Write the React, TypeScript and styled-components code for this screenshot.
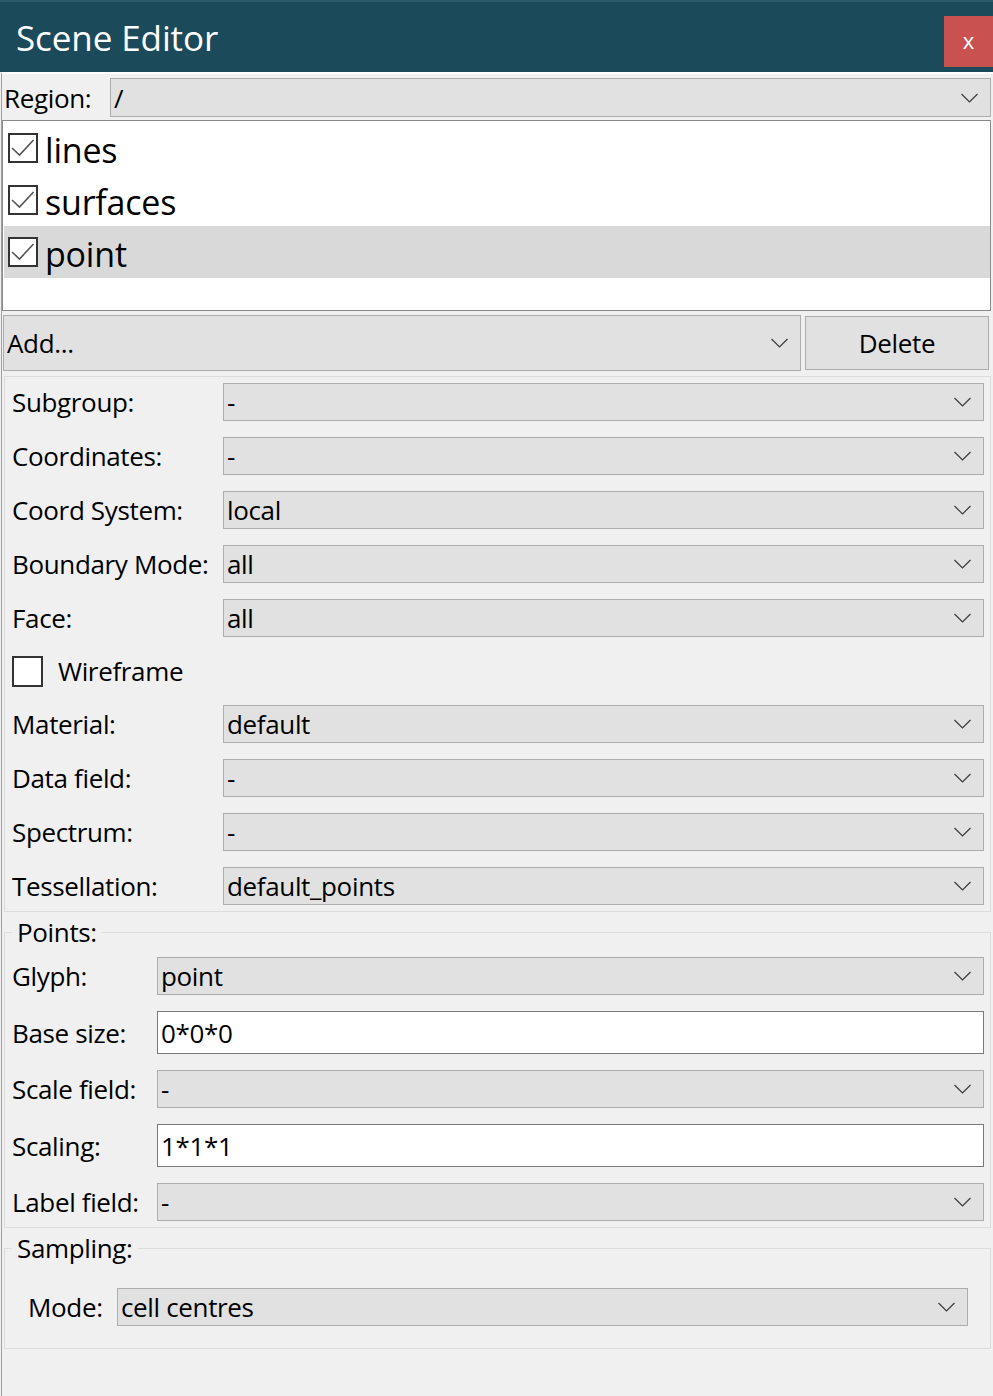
import React from "react";
import styled, { createGlobalStyle } from "styled-components";

const GlobalStyle = createGlobalStyle`
  html, body {
    margin: 0;
    padding: 0;
    background: #f0f0f0;
  }
  * {
    box-sizing: border-box;
  }
`;

const Window = styled.div`
  width: 993px;
  height: 1396px;
  background: #f0f0f0;
  font-family: "Open Sans", "Noto Sans", sans-serif;
  color: #000;
  display: flex;
  flex-direction: column;
  overflow: hidden;
`;

const TitleBar = styled.div`
  height: 72px;
  flex: none;
  background: #1b4a5b;
  border-top: 2px solid #2b5a6a;
  display: flex;
  align-items: center;
  justify-content: space-between;
  padding-left: 16px;
`;

const Title = styled.h1`
  margin: 0;
  font-size: 35px;
  font-weight: 400;
  color: #ffffff;
  line-height: 1;
  letter-spacing: -0.1px;
`;

const CloseButton = styled.button`
  align-self: flex-end;
  margin-bottom: 5px;
  width: 49px;
  height: 51px;
  border: none;
  background: #c9514f;
  color: #ffffff;
  font-family: "Open Sans", sans-serif;
  font-size: 22px;
  line-height: 1;
  padding: 0 0 4px;
`;

const Body = styled.div`
  flex: 1;
  margin-left: 1px;
  border-left: 1px solid #a0a0a0;
  border-top: 2px solid #ffffff;
  display: flex;
  flex-direction: column;
  letter-spacing: -0.35px;
`;

const RegionRow = styled.div`
  display: flex;
  align-items: center;
  height: 43px;
  padding: 4px 2px 0 2px;
`;

const RegionLabel = styled.span`
  width: 106px;
  flex: none;
  font-size: 26px;
`;

const Combo = styled.div<{ $height?: number }>`
  flex: 1;
  height: ${(p) => p.$height ?? 38}px;
  display: flex;
  align-items: center;
  justify-content: space-between;
  padding: 0 12px 0 3px;
  background: #e1e1e1;
  border: 1px solid #adadad;
  font-size: 26px;
  white-space: nowrap;
`;

const ItemList = styled.div`
  margin: 3px 2px 0 0;
  height: 191px;
  background: #ffffff;
  border: 1px solid #8a8a8a;
  padding: 1px 0 0 1px;
`;

const Item = styled.div<{ $selected?: boolean }>`
  height: 52px;
  display: flex;
  align-items: center;
  gap: 7px;
  padding-left: 4px;
  background: ${(p) => (p.$selected ? "#d9d9d9" : "transparent")};
  font-size: 34px;
  letter-spacing: -0.2px;

  & > span:last-child {
    padding-top: 3px;
  }
`;

const Box = styled.span<{ $size: number }>`
  width: ${(p) => p.$size}px;
  height: ${(p) => p.$size}px;
  flex: none;
  border: 2px solid #333333;
  background: #ffffff;
  display: flex;
  align-items: center;
  justify-content: center;
`;

const ActionRow = styled.div`
  display: flex;
  gap: 4px;
  height: 56px;
  margin: 4px 4px 0 1px;
`;

const DeleteButton = styled.button`
  width: 184px;
  margin: 1px 0;
  background: #e1e1e1;
  border: 1px solid #adadad;
  font-family: "Open Sans", sans-serif;
  font-size: 26px;
  letter-spacing: -0.35px;
  color: #000;
  padding: 0;
`;

const Frame = styled.div`
  margin: 5px 2px 0 2px;
  border: 1px solid #dcdcdc;
  padding: 6px 6px 6px 7px;
  display: flex;
  flex-direction: column;
  gap: 16px;
`;

const Group = styled.fieldset`
  margin: 3px 2px 0 2px;
  min-width: 0;
  border: 1px solid #dcdcdc;
  padding: 0;
`;

const Legend = styled.legend`
  margin-left: 7px;
  padding: 0 5px;
  font-size: 26px;
  line-height: 34px;
`;

const GroupBody = styled.div<{ $pad: string }>`
  padding: ${(p) => p.$pad};
  display: flex;
  flex-direction: column;
  gap: 16px;
`;

const Row = styled.div<{ $labelWidth: number }>`
  display: grid;
  grid-template-columns: ${(p) => p.$labelWidth}px 1fr;
  align-items: center;
`;

const Label = styled.span`
  font-size: 26px;
  white-space: nowrap;
`;

const TextInput = styled.div`
  height: 43px;
  display: flex;
  align-items: center;
  padding-left: 3px;
  background: #ffffff;
  border: 1px solid #7a7a7a;
  font-size: 26px;
`;

const CheckRow = styled.div`
  height: 36px;
  display: flex;
  align-items: center;
  gap: 15px;
  font-size: 26px;
`;

const Chevron = () => (
  <svg width="17" height="10" viewBox="0 0 17 10" style={{ flex: "none" }}>
    <polyline points="0.5,1 8.5,9 16.5,1" fill="none" stroke="#3a3a3a" strokeWidth="1.2" />
  </svg>
);

const Check = () => (
  <svg width="26" height="26" viewBox="0 0 26 26">
    <polyline points="2,13 9.5,20 23.5,5" fill="none" stroke="#555555" strokeWidth="1.6" />
  </svg>
);

const Select = ({ value, height }: { value: string; height?: number }) => (
  <Combo $height={height}>
    <span>{value}</span>
    <Chevron />
  </Combo>
);

const mainFields = [
  { label: "Subgroup:", value: "-" },
  { label: "Coordinates:", value: "-" },
  { label: "Coord System:", value: "local" },
  { label: "Boundary Mode:", value: "all" },
  { label: "Face:", value: "all" },
];

const lowerFields = [
  { label: "Material:", value: "default" },
  { label: "Data field:", value: "-" },
  { label: "Spectrum:", value: "-" },
  { label: "Tessellation:", value: "default_points" },
];

const items = ["lines", "surfaces", "point"];

export default function App() {
  return (
    <Window>
      <GlobalStyle />
      <TitleBar>
        <Title>Scene Editor</Title>
        <CloseButton>x</CloseButton>
      </TitleBar>
      <Body>
        <RegionRow>
          <RegionLabel>Region:</RegionLabel>
          <Select value="/" height={39} />
        </RegionRow>

        <ItemList>
          {items.map((name, i) => (
            <Item key={name} $selected={i === items.length - 1}>
              <Box $size={30}>
                <Check />
              </Box>
              <span>{name}</span>
            </Item>
          ))}
        </ItemList>

        <ActionRow>
          <Select value="Add..." height={56} />
          <DeleteButton>Delete</DeleteButton>
        </ActionRow>

        <Frame>
          {mainFields.map((f) => (
            <Row key={f.label} $labelWidth={211}>
              <Label>{f.label}</Label>
              <Select value={f.value} />
            </Row>
          ))}
          <CheckRow>
            <Box $size={31} />
            <span>Wireframe</span>
          </CheckRow>
          {lowerFields.map((f) => (
            <Row key={f.label} $labelWidth={211}>
              <Label>{f.label}</Label>
              <Select value={f.value} />
            </Row>
          ))}
        </Frame>

        <Group>
          <Legend>Points:</Legend>
          <GroupBody $pad="8px 6px 6px 7px">
            <Row $labelWidth={145}>
              <Label>Glyph:</Label>
              <Select value="point" />
            </Row>
            <Row $labelWidth={145}>
              <Label>Base size:</Label>
              <TextInput>0*0*0</TextInput>
            </Row>
            <Row $labelWidth={145}>
              <Label>Scale field:</Label>
              <Select value="-" />
            </Row>
            <Row $labelWidth={145}>
              <Label>Scaling:</Label>
              <TextInput>1*1*1</TextInput>
            </Row>
            <Row $labelWidth={145}>
              <Label>Label field:</Label>
              <Select value="-" />
            </Row>
          </GroupBody>
        </Group>

        <Group>
          <Legend>Sampling:</Legend>
          <GroupBody $pad="23px 22px 22px 23px">
            <Row $labelWidth={89}>
              <Label>Mode:</Label>
              <Select value="cell centres" />
            </Row>
          </GroupBody>
        </Group>
      </Body>
    </Window>
  );
}
